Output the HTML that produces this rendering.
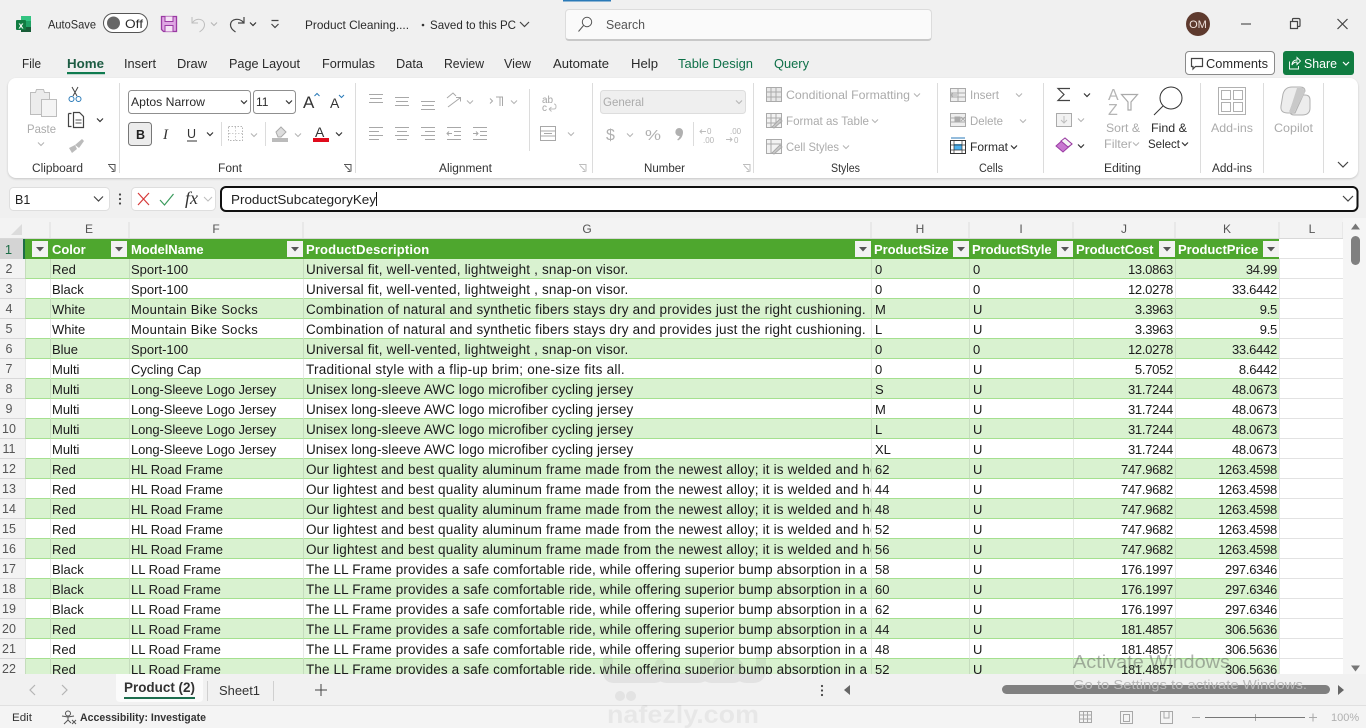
<!DOCTYPE html>
<html><head><meta charset="utf-8"><title>Product Cleaning</title>
<style>
html,body{margin:0;padding:0;width:1366px;height:728px;overflow:hidden;background:#f0f0f0;font-family:"Liberation Sans",sans-serif;color:#222}
#ribbon{position:absolute;left:8px;top:78px;width:1350px;height:100px;background:#fff;border-radius:8px;box-shadow:0 1px 2px rgba(0,0,0,.18)}
#search{position:absolute;left:565px;top:9px;width:365px;height:29px;background:#fafafa;border:1px solid #dcdcdc;border-bottom:2px solid #c8c8c8;border-radius:4px}
#gridbg{position:absolute;left:0;top:218px;width:1366px;height:456px;background:#f3f3f3}
#clip{position:absolute;left:0;top:239px;width:1343px;height:435px;overflow:hidden;background:#fff}
table{border-collapse:separate;border-spacing:0;table-layout:fixed;width:1343px;font-size:13px}
td{box-sizing:border-box;height:20px;padding:2px 0 0 3px;white-space:nowrap;overflow:hidden;border-bottom:1px solid #a5e08f;border-left:1px solid rgba(0,0,0,.09);line-height:17px;color:#1a1a1a}
td:nth-child(3),td:nth-child(4){padding-left:1px}
td:nth-child(5){font-size:13.5px;letter-spacing:.17px;padding-left:2px}
td.a{letter-spacing:.04px}
td.b{letter-spacing:.26px}
td.c{letter-spacing:.13px}
td.m{letter-spacing:.3px}
td.j{letter-spacing:-.1px}
td.h{background:#f3f3f3;border:0;border-bottom:1px solid #d8d8d8;text-align:center;padding:2px 7px 0 0;color:#555;font-size:12.5px;letter-spacing:0}
td.r{text-align:right;padding:2px 2px 0 0;letter-spacing:-.28px}
td.l{background:#fff!important;border-bottom:1px solid #e2e2e2;border-left:1px solid #e2e2e2}
tr.e td{background:#d9f2d0}
tr.e td.h{background:#f3f3f3}
tr.t td{background:#4ea72e;color:#fff;font-weight:bold;letter-spacing:-.05px;border:0;font-size:13px;padding:1px 0 0 3px;line-height:19px}
tr.t td:nth-child(3),tr.t td:nth-child(4){padding-left:2px}
tr.t td:nth-child(5){letter-spacing:.15px}
tr.t td.h{background:#d4d4d4;color:#1c6d46;font-weight:normal;border-right:2px solid #1c6d46;letter-spacing:0;padding:1px 6px 0 0}
tr.t td.l{border-bottom:1px solid #e2e2e2;border-left:0}
svg#o{position:absolute;left:0;top:0;width:1366px;height:728px}
svg text{font-family:"Liberation Sans",sans-serif}
.s{fill:none;stroke:#555;stroke-width:1}
.g{fill:none;stroke:#bdbdbd;stroke-width:1}
.d{fill:none;stroke:#444;stroke-width:1.2}
.lg{fill:#ababab;font-size:12px}
.dk{fill:#2a2a2a;font-size:12px}
.tab{fill:#2a2a2a;font-size:13px}
.lb{fill:#333;font-size:11.5px}
.sep{stroke:#dcdcdc;stroke-width:1}
</style></head><body>
<div id="ribbon"></div>
<div id="search"></div>
<div id="gridbg"></div>
<div id="clip"><table>
<colgroup><col style="width:25px"><col style="width:25px"><col style="width:79px"><col style="width:174px"><col style="width:568px"><col style="width:98px"><col style="width:104px"><col style="width:102px"><col style="width:104px"><col style="width:64px"></colgroup>
<tr class="t"><td class="h">1</td><td></td><td>Color</td><td>ModelName</td><td>ProductDescription</td><td>ProductSize</td><td>ProductStyle</td><td>ProductCost</td><td>ProductPrice</td><td class="l"></td></tr>
<tr class="e"><td class="h">2</td><td></td><td>Red</td><td>Sport-100</td><td>Universal fit, well-vented, lightweight , snap-on visor.</td><td>0</td><td>0</td><td class="r">13.0863</td><td class="r">34.99</td><td class="l"></td></tr>
<tr><td class="h">3</td><td></td><td>Black</td><td>Sport-100</td><td>Universal fit, well-vented, lightweight , snap-on visor.</td><td>0</td><td>0</td><td class="r">12.0278</td><td class="r">33.6442</td><td class="l"></td></tr>
<tr class="e"><td class="h">4</td><td></td><td>White</td><td class="m">Mountain Bike Socks</td><td>Combination of natural and synthetic fibers stays dry and provides just the right cushioning.</td><td>M</td><td>U</td><td class="r">3.3963</td><td class="r">9.5</td><td class="l"></td></tr>
<tr><td class="h">5</td><td></td><td>White</td><td class="m">Mountain Bike Socks</td><td>Combination of natural and synthetic fibers stays dry and provides just the right cushioning.</td><td>L</td><td>U</td><td class="r">3.3963</td><td class="r">9.5</td><td class="l"></td></tr>
<tr class="e"><td class="h">6</td><td></td><td>Blue</td><td>Sport-100</td><td>Universal fit, well-vented, lightweight , snap-on visor.</td><td>0</td><td>0</td><td class="r">12.0278</td><td class="r">33.6442</td><td class="l"></td></tr>
<tr><td class="h">7</td><td></td><td>Multi</td><td>Cycling Cap</td><td class="b">Traditional style with a flip-up brim; one-size fits all.</td><td>0</td><td>U</td><td class="r">5.7052</td><td class="r">8.6442</td><td class="l"></td></tr>
<tr class="e"><td class="h">8</td><td></td><td>Multi</td><td class="j">Long-Sleeve Logo Jersey</td><td class="a">Unisex long-sleeve AWC logo microfiber cycling jersey</td><td>S</td><td>U</td><td class="r">31.7244</td><td class="r">48.0673</td><td class="l"></td></tr>
<tr><td class="h">9</td><td></td><td>Multi</td><td class="j">Long-Sleeve Logo Jersey</td><td class="a">Unisex long-sleeve AWC logo microfiber cycling jersey</td><td>M</td><td>U</td><td class="r">31.7244</td><td class="r">48.0673</td><td class="l"></td></tr>
<tr class="e"><td class="h">10</td><td></td><td>Multi</td><td class="j">Long-Sleeve Logo Jersey</td><td class="a">Unisex long-sleeve AWC logo microfiber cycling jersey</td><td>L</td><td>U</td><td class="r">31.7244</td><td class="r">48.0673</td><td class="l"></td></tr>
<tr><td class="h">11</td><td></td><td>Multi</td><td class="j">Long-Sleeve Logo Jersey</td><td class="a">Unisex long-sleeve AWC logo microfiber cycling jersey</td><td>XL</td><td>U</td><td class="r">31.7244</td><td class="r">48.0673</td><td class="l"></td></tr>
<tr class="e"><td class="h">12</td><td></td><td>Red</td><td>HL Road Frame</td><td>Our lightest and best quality aluminum frame made from the newest alloy; it is welded and heat-treated for strength.</td><td>62</td><td>U</td><td class="r">747.9682</td><td class="r">1263.4598</td><td class="l"></td></tr>
<tr><td class="h">13</td><td></td><td>Red</td><td>HL Road Frame</td><td>Our lightest and best quality aluminum frame made from the newest alloy; it is welded and heat-treated for strength.</td><td>44</td><td>U</td><td class="r">747.9682</td><td class="r">1263.4598</td><td class="l"></td></tr>
<tr class="e"><td class="h">14</td><td></td><td>Red</td><td>HL Road Frame</td><td>Our lightest and best quality aluminum frame made from the newest alloy; it is welded and heat-treated for strength.</td><td>48</td><td>U</td><td class="r">747.9682</td><td class="r">1263.4598</td><td class="l"></td></tr>
<tr><td class="h">15</td><td></td><td>Red</td><td>HL Road Frame</td><td>Our lightest and best quality aluminum frame made from the newest alloy; it is welded and heat-treated for strength.</td><td>52</td><td>U</td><td class="r">747.9682</td><td class="r">1263.4598</td><td class="l"></td></tr>
<tr class="e"><td class="h">16</td><td></td><td>Red</td><td>HL Road Frame</td><td>Our lightest and best quality aluminum frame made from the newest alloy; it is welded and heat-treated for strength.</td><td>56</td><td>U</td><td class="r">747.9682</td><td class="r">1263.4598</td><td class="l"></td></tr>
<tr><td class="h">17</td><td></td><td>Black</td><td>LL Road Frame</td><td class="c">The LL Frame provides a safe comfortable ride, while offering superior bump absorption in a true multi-sport bike.</td><td>58</td><td>U</td><td class="r">176.1997</td><td class="r">297.6346</td><td class="l"></td></tr>
<tr class="e"><td class="h">18</td><td></td><td>Black</td><td>LL Road Frame</td><td class="c">The LL Frame provides a safe comfortable ride, while offering superior bump absorption in a true multi-sport bike.</td><td>60</td><td>U</td><td class="r">176.1997</td><td class="r">297.6346</td><td class="l"></td></tr>
<tr><td class="h">19</td><td></td><td>Black</td><td>LL Road Frame</td><td class="c">The LL Frame provides a safe comfortable ride, while offering superior bump absorption in a true multi-sport bike.</td><td>62</td><td>U</td><td class="r">176.1997</td><td class="r">297.6346</td><td class="l"></td></tr>
<tr class="e"><td class="h">20</td><td></td><td>Red</td><td>LL Road Frame</td><td class="c">The LL Frame provides a safe comfortable ride, while offering superior bump absorption in a true multi-sport bike.</td><td>44</td><td>U</td><td class="r">181.4857</td><td class="r">306.5636</td><td class="l"></td></tr>
<tr><td class="h">21</td><td></td><td>Red</td><td>LL Road Frame</td><td class="c">The LL Frame provides a safe comfortable ride, while offering superior bump absorption in a true multi-sport bike.</td><td>48</td><td>U</td><td class="r">181.4857</td><td class="r">306.5636</td><td class="l"></td></tr>
<tr class="e"><td class="h">22</td><td></td><td>Red</td><td>LL Road Frame</td><td class="c">The LL Frame provides a safe comfortable ride, while offering superior bump absorption in a true multi-sport bike.</td><td>52</td><td>U</td><td class="r">181.4857</td><td class="r">306.5636</td><td class="l"></td></tr>
</table></div>

<svg id="o" viewBox="0 0 1366 728" xmlns="http://www.w3.org/2000/svg">
<defs>
<g id="fb"><rect width="16" height="16" fill="#f2f2f2"/><path d="M4 6h8l-4 4.5z" fill="#555"/></g>
<path id="cv" d="M-3-1.5 0 1.5 3-1.5" fill="none" stroke="#333" stroke-width="1.2"/>
<path id="cg" d="M-3-1.5 0 1.5 3-1.5" fill="none" stroke="#b5b5b5" stroke-width="1.1"/>
</defs>

<!-- title bar -->
<rect x="563" y="0" width="48" height="1.5" fill="#2a7ab8"/>
<rect x="21" y="16" width="10" height="16" rx="1.5" fill="#21a366"/><rect x="21" y="16" width="10" height="5" fill="#33c481"/><rect x="21" y="27" width="10" height="5" fill="#185c37"/>
<rect x="16" y="20" width="10" height="10" rx="1" fill="#107c41"/><text x="18.5" y="28.5" font-size="9" font-weight="bold" fill="#fff">x</text>
<text x="48" y="28.5" class="dk" textLength="48" lengthAdjust="spacingAndGlyphs">AutoSave</text>
<rect x="103.500" y="13.500" width="44" height="19" rx="9.500" fill="#fff" stroke="#555"/>
<circle cx="113.500" cy="23" r="6.500" fill="#666"/>
<text x="125" y="28" class="dk" textLength="18" lengthAdjust="spacingAndGlyphs">Off</text>
<path d="M161.500 16.500h15v15h-13l-2-2z" fill="#dfa6e3" stroke="#9a3ba3" stroke-width="1.3"/><path d="M165 16.500v5h8v-5M165 31.500v-6h8v6" fill="#f5e3f6" stroke="#9a3ba3"/>
<path d="M192 17v6h6M192.500 22.500c4-5 12-4 12 2.500 0 3-2 5-5 7" class="g" stroke-width="1.3"/>
<use href="#cg" x="214" y="24"/>
<path d="M244 17v6h-6M243.500 22.500c-4-5-13-4-13 2.500 0 3 2 5 5 7" fill="none" stroke="#444" stroke-width="1.2"/>
<use href="#cv" x="253" y="24"/>
<path d="M271.500 20.500h7M271.500 24l3.500 3.500 3.500-3.500" class="d" stroke-width="1"/>
<text x="305" y="29" class="dk" textLength="104" lengthAdjust="spacingAndGlyphs">Product Cleaning....</text>
<circle cx="423" cy="25" r="1.300" fill="#333"/>
<text x="430" y="29" class="dk" textLength="86" lengthAdjust="spacingAndGlyphs">Saved to this PC</text>
<path d="M520 22l4.500 4.500 4.500-4.500" class="d"/>
<circle cx="587" cy="22" r="4.700" class="s"/><path d="M583.500 25.500l-5 6" class="s"/>
<text x="606" y="29" font-size="12.500" fill="#555" textLength="39" lengthAdjust="spacingAndGlyphs">Search</text>
<circle cx="1198" cy="24" r="12" fill="#5e3a2e"/><text x="1198" y="28" font-size="11" fill="#f0e4df" text-anchor="middle">OM</text>
<path d="M1241 24h10" stroke="#333" fill="none"/>
<path d="M1290.500 21.500h7v7h-7zM1292.500 21v-1.500q0-1 1-1h5q1.500 0 1.500 1.500v5.500q0 1-1 1h-1" class="d" stroke-width="1"/>
<path d="M1337.500 19l10 10M1347.500 19l-10 10" class="d" stroke-width="1"/>

<!-- tabs -->
<text x="22" y="68" class="tab" textLength="19" lengthAdjust="spacingAndGlyphs">File</text>
<text x="67" y="68" class="tab" font-weight="bold" textLength="37" lengthAdjust="spacingAndGlyphs" style="fill:#1d5c43">Home</text>
<rect x="67" y="72" width="38" height="2.200" fill="#0f7b4f"/>
<text x="124" y="68" class="tab" textLength="32" lengthAdjust="spacingAndGlyphs">Insert</text>
<text x="177" y="68" class="tab" textLength="30" lengthAdjust="spacingAndGlyphs">Draw</text>
<text x="229" y="68" class="tab" textLength="71" lengthAdjust="spacingAndGlyphs">Page Layout</text>
<text x="322" y="68" class="tab" textLength="53" lengthAdjust="spacingAndGlyphs">Formulas</text>
<text x="396" y="68" class="tab" textLength="27" lengthAdjust="spacingAndGlyphs">Data</text>
<text x="444" y="68" class="tab" textLength="40" lengthAdjust="spacingAndGlyphs">Review</text>
<text x="504" y="68" class="tab" textLength="27" lengthAdjust="spacingAndGlyphs">View</text>
<text x="553" y="68" class="tab" textLength="56" lengthAdjust="spacingAndGlyphs">Automate</text>
<text x="631" y="68" class="tab" textLength="27" lengthAdjust="spacingAndGlyphs">Help</text>
<text x="678" y="68" class="tab" textLength="75" lengthAdjust="spacingAndGlyphs" style="fill:#0e7048">Table Design</text>
<text x="774" y="68" class="tab" textLength="35" lengthAdjust="spacingAndGlyphs" style="fill:#0e7048">Query</text>

<!-- comments/share -->
<rect x="1185.500" y="51.500" width="89" height="23" rx="3.500" fill="#fff" stroke="#8a8a8a"/>
<path d="M1191.500 58.500h11v8h-7l-2.500 2.500v-2.500h-1.500z" class="d" stroke-width="1"/>
<text x="1206" y="68" class="tab" style="font-size:12.500px" textLength="62" lengthAdjust="spacingAndGlyphs">Comments</text>
<rect x="1283" y="51" width="71" height="24" rx="3" fill="#107c41"/>
<path d="M1289.500 61.500v7.500h9v-3M1292 65c0-3 2-5 5-5v-2.500l3.500 3.500-3.500 3.500V62c-2 0-4 1-5 3z" fill="none" stroke="#fff" stroke-width=".9"/>
<text x="1304" y="68" font-size="12.500" fill="#fff" textLength="33" lengthAdjust="spacingAndGlyphs">Share</text>
<path d="M1343 62l3 3 3-3" fill="none" stroke="#fff" stroke-width="1.200"/>

<!-- ribbon separators -->
<path class="sep" d="M119.500 83v90M355.500 83v90M529.500 89v62M592.500 83v90M753.500 83v90M937.500 83v90M1043.500 83v90M1200.500 83v90M1263.500 83v90M1323.500 83v90M221.500 122v24M265.500 122v24M693.500 122v24"/>

<!-- clipboard -->
<path d="M30.500 92.500h5l1-3h7l1 3h5v22h-19z" fill="#ececec" stroke="#bdbdbd"/>
<rect x="41.500" y="99.500" width="15" height="17" fill="#f4f4f4" stroke="#bdbdbd"/>
<text x="27" y="133" class="lg" textLength="29" lengthAdjust="spacingAndGlyphs">Paste</text>
<use href="#cg" x="41" y="144"/>
<path d="M72 87l5 9M78 87l-5 9" fill="none" stroke="#444"/><circle cx="71.500" cy="99" r="2.500" fill="none" stroke="#2a7ab8"/><circle cx="78.500" cy="99" r="2.500" fill="none" stroke="#2a7ab8"/>
<path d="M68.500 113.500h3M68.500 113.500v13h3M73.500 116.500v-4h6l4 4v11h-10z" class="d" stroke-width="1"/><path d="M75.500 120h6M75.500 123h6" class="s"/>
<use href="#cv" x="100" y="120"/>
<path d="M69 148l6-3 2 4-5 4zM75 145l7-6 2 2-5 7z" fill="#bbb"/>
<text x="32" y="172" class="lb" textLength="51" lengthAdjust="spacingAndGlyphs">Clipboard</text>
<path d="M108 164.500h7v7M109 165.500l5 5M111.500 171.500h3" class="s" stroke-width=".9"/>

<!-- font -->
<rect x="128.500" y="90.500" width="122" height="23" rx="3" fill="#fff" stroke="#8f8f8f"/>
<text x="131" y="106" class="dk" textLength="74" lengthAdjust="spacingAndGlyphs">Aptos Narrow</text>
<use href="#cv" x="244" y="102"/>
<rect x="253.500" y="90.500" width="42" height="23" rx="3" fill="#fff" stroke="#8f8f8f"/>
<text x="256" y="106" class="dk">11</text>
<use href="#cv" x="289" y="102"/>
<text x="303" y="108" font-size="17" fill="#333">A</text><path d="M314.500 96l2.500-2.500 2.500 2.500" fill="none" stroke="#2a7ab8"/>
<text x="330" y="108" font-size="14" fill="#333">A</text><path d="M339 95l2.500 2.500 2.500-2.500" fill="none" stroke="#2a7ab8"/>
<rect x="128.500" y="122.500" width="23" height="23" rx="3" fill="#ececec" stroke="#777"/>
<text x="136" y="139" font-size="12.500" font-weight="bold" fill="#222">B</text>
<text x="163" y="139" fill="#333" style="font-family:'Liberation Serif',serif;font-size:15px;font-style:italic">I</text>
<text x="187" y="138" font-size="12.500" fill="#333">U</text><path d="M187 141h10" stroke="#333"/>
<use href="#cv" x="210" y="134"/>
<rect x="228.500" y="126.500" width="14" height="14" fill="none" stroke="#b5b5b5" stroke-dasharray="1.500 1.500"/><path d="M235.500 127v14M229 133.500h14" stroke="#ccc" stroke-dasharray="1.500 1.500"/>
<use href="#cg" x="254" y="135"/>
<path d="M276 132l5-5 5 5-5 5h-3z" fill="#ddd" stroke="#aaa"/><rect x="272" y="138" width="16" height="4" fill="#bbb"/>
<use href="#cg" x="298" y="135"/>
<text x="315" y="137" font-size="14" fill="#333">A</text><rect x="313" y="138" width="16" height="4" fill="#e00b1c"/>
<use href="#cv" x="339" y="134"/>
<text x="218" y="172" class="lb" textLength="24" lengthAdjust="spacingAndGlyphs">Font</text>
<path d="M344 164.500h7v7M345 165.500l5 5M347.500 171.500h3" class="s" stroke-width=".9"/>

<!-- alignment -->
<g stroke="#a8a8a8" fill="none">
<path d="M369 94.500h14M370 98.500h12M369 102.500h14"/>
<path d="M395 97.500h14M396 101.500h12M395 105.500h14"/>
<path d="M421 101.500h14M422 105.500h12M421 109.500h14"/>
<path d="M448 107l12-9M456 97.500h4.500v4M447 98l6-5 3 3"/>
<use href="#cg" x="470" y="102"/>
<path d="M490 98.500l2.500 2.500-2.500 2.500M496 97h7M500 97v9M502.500 97v9"/>
<use href="#cg" x="514" y="102"/>
<path d="M369 127.500h14M369 131.500h10M369 135.500h14M369 139.500h10"/>
<path d="M395 127.500h14M397 131.500h10M395 135.500h14M397 139.500h10"/>
<path d="M421 127.500h14M425 131.500h10M421 135.500h14M425 139.500h10"/>
<path d="M447 127.500h14M454 131.500h7M454 135.500h7M447 139.500h14M452 133.500h-5M449 131.500l-2 2 2 2"/>
<path d="M473 127.500h14M480 131.500h7M480 135.500h7M473 139.500h14M473 133.500h5M476 131.500l2 2-2 2"/>
<rect x="540.500" y="126.500" width="15" height="14"/><path d="M541 131h14M541 136h14M544 133.500h8"/>
</g>
<text x="542" y="103" font-size="10" fill="#a5a5a5">ab</text><text x="542" y="111" font-size="10" fill="#a5a5a5">c</text><path d="M549 109h5q2 0 2-2.500t-2-2.500M549 109l2.500 2.500M549 109l2.500-2" class="g"/>
<use href="#cg" x="571" y="134"/>
<text x="439" y="172" class="lb" textLength="53" lengthAdjust="spacingAndGlyphs">Alignment</text>
<path d="M579 164.500h7v7M580 165.500l5 5M582.500 171.500h3" class="g" stroke-width=".9"/>

<!-- number -->
<rect x="600.500" y="90.500" width="145" height="23" rx="3" fill="#efefef" stroke="#ddd"/>
<text x="603" y="106" class="lg" textLength="41" lengthAdjust="spacingAndGlyphs">General</text>
<use href="#cg" x="739" y="102"/>
<text x="606" y="140" font-size="16" fill="#b0b0b0">$</text><use href="#cg" x="630" y="135"/>
<text x="645" y="140" font-size="14.500" fill="#b0b0b0" textLength="16" lengthAdjust="spacingAndGlyphs">%</text>
<path d="M679 128a4 4 0 0 1 4 4c0 4-2 7-5 8.500l-.8-1c1.300-1 2.300-2.300 2.500-3.500a4 4 0 1 1-.7-8z" fill="#b0b0b0"/>
<text x="707" y="134" font-size="8" fill="#b5b5b5">0</text><text x="703" y="143" font-size="8" fill="#b5b5b5">.00</text><path d="M700 131.500h6M702 129.500l-2 2 2 2" class="g"/>
<text x="730" y="134" font-size="8" fill="#b5b5b5">.00</text><text x="734" y="143" font-size="8" fill="#b5b5b5">0</text><path d="M726 139.500h6M730 137.500l2 2-2 2" class="g"/>
<text x="644" y="172" class="lb" textLength="41" lengthAdjust="spacingAndGlyphs">Number</text>
<path d="M743 164.500h7v7M744 165.500l5 5M746.500 171.500h3" class="g" stroke-width=".9"/>

<!-- styles -->
<g class="g" style="stroke:#aaa"><rect x="766.500" y="87.500" width="15" height="14" fill="#e8e8e8"/><path d="M771 88v13M776 88v13M767 92h14M767 97h14"/>
<rect x="766.500" y="113.500" width="15" height="14" fill="#f2f2f2"/><path d="M771 114v13M776 114v13M767 118h14M767 123h14"/><path d="M772 127l8-8 2 2-8 7z" fill="#ccc"/>
<rect x="766.500" y="139.500" width="15" height="14" fill="#f2f2f2"/><path d="M767 144h14M771 140v13"/><path d="M772 153l8-8 2 2-8 7z" fill="#ccc"/></g>
<text x="786" y="99" class="lg" textLength="124" lengthAdjust="spacingAndGlyphs">Conditional Formatting</text><use href="#cg" x="917" y="95"/>
<text x="786" y="125" class="lg" textLength="83" lengthAdjust="spacingAndGlyphs">Format as Table</text><use href="#cg" x="875" y="121"/>
<text x="786" y="151" class="lg" textLength="53" lengthAdjust="spacingAndGlyphs">Cell Styles</text><use href="#cg" x="846" y="147"/>
<text x="831" y="172" class="lb" textLength="29" lengthAdjust="spacingAndGlyphs">Styles</text>

<!-- cells -->
<g class="g" style="stroke:#aaa"><rect x="950.500" y="88.500" width="15" height="13" fill="#eee"/><path d="M951 93h14M951 97h14M958 89v12"/><path d="M951 95h6M953 93l-2 2 2 2"/>
<path d="M950.500 113.500h15v13h-15z" fill="#eee"/><path d="M951 118h14M951 122h14"/><rect x="955" y="117" width="5" height="5" fill="#aaa"/><path d="M961 117l4 4M965 117l-4 4"/></g>
<rect x="950.500" y="140.500" width="15" height="13" fill="#fff" stroke="#333"/><rect x="954" y="144" width="8" height="6" fill="#4bb0ee"/><path d="M951 145h14M951 150h14M954 141v12M962 141v12" stroke="#333" stroke-width=".7" fill="none"/><path d="M951 138h14" stroke="#2a7ab8"/>
<text x="970" y="99" class="lg" textLength="29" lengthAdjust="spacingAndGlyphs">Insert</text><use href="#cg" x="1019" y="95"/>
<text x="970" y="125" class="lg" textLength="33" lengthAdjust="spacingAndGlyphs">Delete</text><use href="#cg" x="1023" y="121"/>
<text x="970" y="151" class="dk" textLength="38" lengthAdjust="spacingAndGlyphs">Format</text><use href="#cv" x="1014" y="147"/>
<text x="979" y="172" class="lb" textLength="24" lengthAdjust="spacingAndGlyphs">Cells</text>

<!-- editing -->
<path d="M1070 88.500h-12l6 6-6 6h12" class="d"/>
<use href="#cv" x="1087" y="95"/>
<rect x="1056.500" y="113.500" width="15" height="13" fill="#f2f2f2" stroke="#aaa"/><path d="M1064 116v7M1061 120l3 3 3-3" class="g"/><use href="#cg" x="1081" y="120"/>
<path d="M1056 146l9-8 7 6-9 8z" fill="#c878d0" stroke="#9a3ba3"/><path d="M1061 141l7 6 4-3-7-6z" fill="#f4f4f4" stroke="#9a3ba3"/>
<use href="#cv" x="1081" y="146"/>
<text x="1108" y="100" font-size="16" fill="#b5b5b5">A</text><text x="1108" y="115" font-size="16" fill="#b5b5b5">Z</text>
<path d="M1121.500 94.500h16l-6.500 7.500v8h-3v-8z" fill="none" stroke="#aaa" stroke-width="1.200"/>
<text x="1106" y="132" class="lg" textLength="34" lengthAdjust="spacingAndGlyphs">Sort &amp;</text>
<text x="1104" y="148" class="lg" textLength="28" lengthAdjust="spacingAndGlyphs">Filter</text><use href="#cg" x="1136" y="144"/>
<circle cx="1171" cy="98" r="11" fill="none" stroke="#333" stroke-width="1"/><path d="M1163 106l-9 9" stroke="#333" fill="none"/>
<text x="1151" y="132" class="dk" textLength="36" lengthAdjust="spacingAndGlyphs">Find &amp;</text>
<text x="1148" y="148" class="dk" textLength="32" lengthAdjust="spacingAndGlyphs">Select</text><use href="#cv" x="1185" y="144"/>
<text x="1104" y="172" class="lb" textLength="37" lengthAdjust="spacingAndGlyphs">Editing</text>

<!-- add-ins -->
<path d="M1218.500 87.500h27v27h-27zM1221.500 90.500h9v9h-9zM1233.500 90.500h9v9h-9zM1221.500 102.500h9v9h-9zM1233.500 102.500h9v9h-9z" fill="none" stroke="#b0b0b0"/>
<text x="1211" y="132" class="lg" textLength="42" lengthAdjust="spacingAndGlyphs">Add-ins</text>
<text x="1212" y="172" class="lb" textLength="40" lengthAdjust="spacingAndGlyphs">Add-ins</text>
<path d="M1283 94q2-7 9-7h8q5 0 5 4l-10 22h-7q-8 0-7-7zM1296 95h9q5 0 5 5v8q0 7-8 7h-8q-4 0-4-4z" fill="#ededed" stroke="#b0b0b0"/>
<path d="M1297 88h6l2 4-11 21h-5z" fill="#c9c9c9"/>
<text x="1274" y="132" class="lg" textLength="39" lengthAdjust="spacingAndGlyphs">Copilot</text>
<path d="M1338 162l5 5 5-5" class="d"/>

<!-- formula bar -->
<rect x="9.500" y="187.500" width="100" height="23" rx="4" fill="#fff" stroke="#dedede"/>
<text x="15" y="204" font-size="12.500" fill="#222">B1</text><path d="M94 196.500l4.500 4.500 4.500-4.500" class="d"/>
<circle cx="120" cy="194.500" r="1.100" fill="#444"/><circle cx="120" cy="199" r="1.100" fill="#444"/><circle cx="120" cy="203.500" r="1.100" fill="#444"/>
<rect x="131.500" y="187.500" width="84" height="23" rx="4" fill="#fff" stroke="#dedede"/>
<path d="M138 193l11 12M149 193l-11 12" stroke="#d63a3a" fill="none" stroke-width="1.200"/>
<path d="M160 200l4.500 5 9-11" stroke="#3a9a5c" fill="none" stroke-width="1.200"/>
<text x="185" y="204" fill="#333" style="font-family:'Liberation Serif',serif;font-size:18px;font-style:italic">fx</text>
<path d="M204 197l4 4 4-4" class="g"/>
<rect x="221" y="187" width="1136.500" height="24" rx="5" fill="#fff" stroke="#111" stroke-width="2"/>
<text x="231" y="204" font-size="13" fill="#222" textLength="145" lengthAdjust="spacingAndGlyphs">ProductSubcategoryKey</text>
<path d="M376.500 192v14" stroke="#111"/>
<path d="M1343 196l5 5 5-5" class="d" stroke-width="1"/>

<!-- column headers -->
<rect x="0" y="218" width="1343" height="21" fill="#f3f3f3"/>
<path d="M22 224v11H11z" fill="#dcdcdc"/>
<path d="M50 222v16M129 222v16M303 222v16M871 222v16M969 222v16M1073 222v16M1175 222v16M1279 222v16M1343 222v16" stroke="#dcdcdc"/>
<path d="M0 238.500h1343" stroke="#d8d8d8"/>
<g font-size="12" fill="#555" text-anchor="middle"><text x="89" y="233">E</text><text x="216" y="233">F</text><text x="587" y="233">G</text><text x="920" y="233">H</text><text x="1021" y="233">I</text><text x="1124" y="233">J</text><text x="1227" y="233">K</text><text x="1312" y="233">L</text></g>

<!-- filter buttons -->
<use href="#fb" x="32" y="241"/><use href="#fb" x="111" y="241"/><use href="#fb" x="287" y="241"/><use href="#fb" x="855" y="241"/><use href="#fb" x="953" y="241"/><use href="#fb" x="1057" y="241"/><use href="#fb" x="1159" y="241"/><use href="#fb" x="1263" y="241"/>

<!-- vscroll -->
<rect x="1343" y="218" width="23" height="456" fill="#f5f5f5"/>
<path d="M1355.500 223.500l4.500 6h-9z" fill="#777"/>
<rect x="1351" y="236" width="9" height="29" rx="4.500" fill="#808080"/>
<path d="M1355.500 671.500l-4.500-6h9z" fill="#777"/>

<!-- bottom bars -->
<rect x="0" y="674" width="1366" height="32" fill="#f1f1f1"/>
<rect x="0" y="706" width="1366" height="22" fill="#f4f4f4"/>
<path d="M0 705.500h1366" stroke="#e0e0e0"/>
<path d="M35 685l-5 5 5 5M62 685l5 5-5 5" fill="none" stroke="#b5b5b5" stroke-width="1.200"/>
<path d="M116 674h87v24q0 4-4 4h-79q-4 0-4-4z" fill="#fbfbfb"/>
<text x="124" y="692" font-size="13.500" font-weight="bold" fill="#333" textLength="71" lengthAdjust="spacingAndGlyphs">Product (2)</text>
<rect x="124" y="697" width="71" height="2" fill="#1c6d4e"/>
<text x="219" y="695" font-size="13" fill="#333" textLength="41" lengthAdjust="spacingAndGlyphs">Sheet1</text>
<path d="M207.500 681v20M273.500 681v20" stroke="#d0d0d0"/>
<path d="M321 684v12M315 690h12" stroke="#444" fill="none"/>
<circle cx="822" cy="686" r="1.100" fill="#444"/><circle cx="822" cy="690.500" r="1.100" fill="#444"/><circle cx="822" cy="695" r="1.100" fill="#444"/>
<path d="M844 690l6-5v10z" fill="#666"/>
<rect x="1002" y="685" width="328" height="9" rx="4.500" fill="#808080"/>
<path d="M1344 690l-6-5v10z" fill="#666"/>

<!-- status -->
<text x="12" y="721" font-size="11" fill="#333" textLength="20" lengthAdjust="spacingAndGlyphs">Edit</text>
<circle cx="68" cy="713.500" r="2.500" class="s"/><path d="M62 716l6 1 6-1M68 717v3l-4 4M68 720l3 3" class="s"/><path d="M72 720l4 4M76 720l-4 4" class="s"/>
<text x="80" y="721" font-size="11" font-weight="bold" fill="#333" textLength="126" lengthAdjust="spacingAndGlyphs">Accessibility: Investigate</text>
<g fill="none" stroke="#a8a8a8"><rect x="1079.500" y="711.500" width="12" height="11"/><path d="M1083.500 712v11M1087.500 712v11M1080 715h12M1080 719h12"/>
<rect x="1120.500" y="711.500" width="12" height="12"/><rect x="1123.500" y="714.500" width="6" height="7"/>
<path d="M1160.500 711.500h12v12h-12zM1164 712v6h5v-6"/>
<path d="M1192 717.500h8M1205 717.500h100M1255.500 714v7M1309 717.500h8M1313 713.500v8"/></g>
<path d="M1205 717.500h100" stroke="#777"/>
<text x="1331" y="721" font-size="11" fill="#b0b0b0">100%</text>

<!-- watermark overlay -->
<g fill="none" stroke="#8c8c8c" stroke-opacity=".15" stroke-width="10" stroke-linecap="round" stroke-linejoin="round">
<path d="M608 660v12q0 6 6 6h40q6 0 6-6v-8M660 672q0 6 8 6h30q7 0 7-7v-14M705 672q0 6 8 6h20q6 0 6-8t-8-8h-8q-6 0-6 8M739 670q0 8 8 8h6q8 0 8-8v-16"/>
</g>
<circle cx="620" cy="696" r="5" fill="#8c8c8c" fill-opacity=".14"/><circle cx="631" cy="696" r="5" fill="#8c8c8c" fill-opacity=".14"/>
<text x="607" y="723" font-size="25" font-weight="bold" fill="#000" fill-opacity=".05" textLength="152" lengthAdjust="spacingAndGlyphs">nafezly.com</text>
<text x="1073" y="668" font-size="18" fill="#555" fill-opacity=".45" textLength="157" lengthAdjust="spacingAndGlyphs">Activate Windows</text>
<text x="1073" y="689" font-size="13" fill="#b8b8b8" textLength="234" lengthAdjust="spacingAndGlyphs">Go to Settings to activate Windows.</text>
</svg>
</body></html>
